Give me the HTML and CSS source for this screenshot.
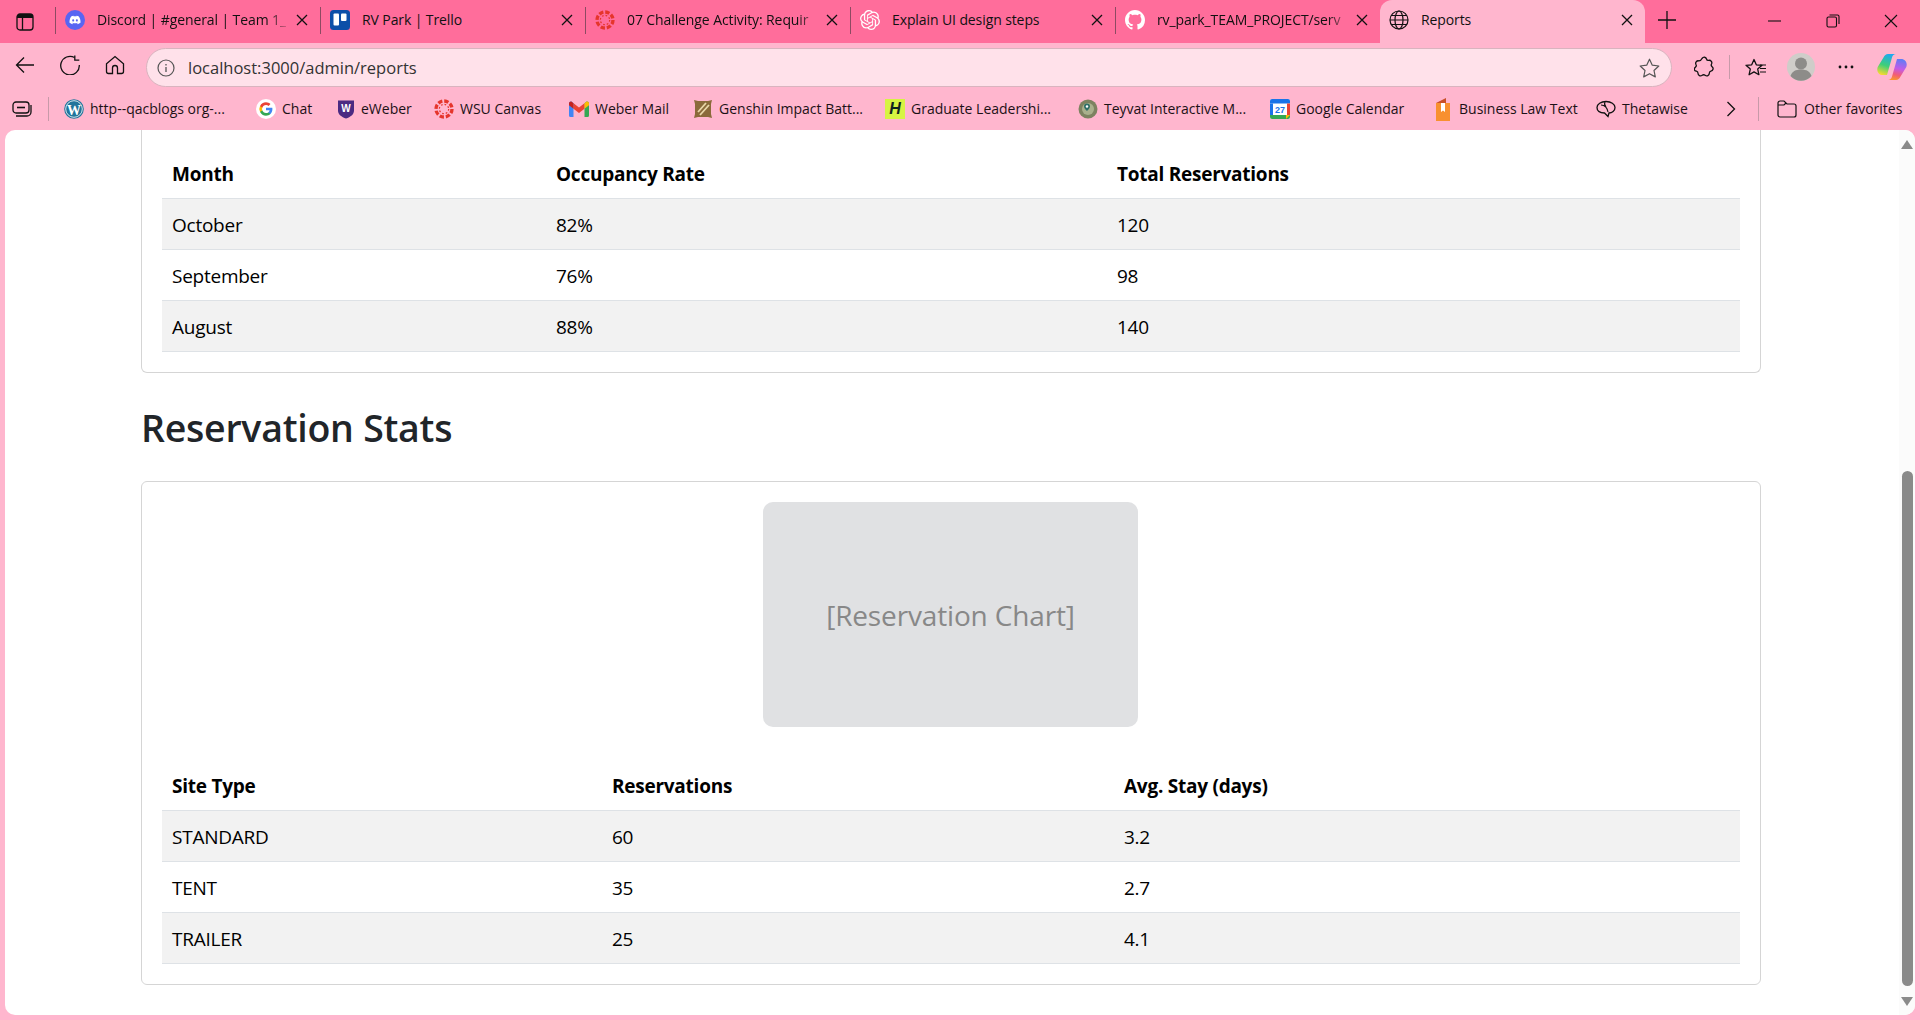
FILE: index.html
```html
<!DOCTYPE html>
<html lang="en">
<head>
    <meta charset="UTF-8">
    <title>Reports</title>
    <link rel="stylesheet" href="styles.css">
</head>
<body>
    <svg class="defs" width="0" height="0">
        <symbol id="x" viewBox="0 0 12 12"><path d="M1 1l10 10M11 1L1 11" fill="none" stroke="#111" stroke-width="1.3"/></symbol>
        <symbol id="canvas" viewBox="0 0 24 24">
            <g fill="none" stroke="#e5352b">
                <circle cx="12" cy="12" r="9.6" stroke-width="4" stroke-dasharray="5.2 2.34"/>
                <circle cx="12" cy="12" r="5.6" stroke-width="1.5" stroke-dasharray="2 2.4"/>
            </g>
        </symbol>
    </svg>

    <!-- tab strip -->
    <div class="tabstrip">
        <div class="strip-btn">
            <svg width="20" height="20" viewBox="0 0 20 20"><rect x="2" y="2" width="16" height="16" rx="3" fill="none" stroke="#111" stroke-width="1.3"/><path d="M2 5a3 3 0 0 1 3-3h10a3 3 0 0 1 3 3v1H2z" fill="#111"/><path d="M7.500 6v12" stroke="#111" stroke-width="1.3"/></svg>
        </div>
        <div class="tab">
            <svg class="favicon" viewBox="0 0 20 20"><circle cx="10" cy="10" r="10" fill="#5865f2"/><g transform="translate(4.500 4.500) scale(.46)"><path fill="#fff" d="M20.317 4.3698a19.7913 19.7913 0 00-4.8851-1.5152.0741.0741 0 00-.0785.0371c-.211.3753-.4447.8648-.6083 1.2495-1.8447-.2762-3.68-.2762-5.4868 0-.1636-.3933-.4058-.8742-.6177-1.2495a.077.077 0 00-.0785-.037 19.7363 19.7363 0 00-4.8852 1.515.0699.0699 0 00-.0321.0277C.5334 9.0458-.319 13.5799.0992 18.0578a.0824.0824 0 00.0312.0561c2.0528 1.5076 4.0413 2.4228 5.9929 3.0294a.0777.0777 0 00.0842-.0276c.4616-.6304.8731-1.2952 1.226-1.9942a.076.076 0 00-.0416-.1057c-.6528-.2476-1.2743-.5495-1.8722-.8923a.077.077 0 01-.0076-.1277c.1258-.0943.2517-.1923.3718-.2914a.0743.0743 0 01.0776-.0105c3.9278 1.7933 8.18 1.7933 12.0614 0a.0739.0739 0 01.0785.0095c.1202.099.246.1981.3728.2924a.077.077 0 01-.0066.1276 12.2986 12.2986 0 01-1.873.8914.0766.0766 0 00-.0407.1067c.3604.698.7719 1.3628 1.225 1.9932a.076.076 0 00.0842.0286c1.961-.6067 3.9495-1.5219 6.0023-3.0294a.077.077 0 00.0313-.0552c.5004-5.177-.8382-9.6739-3.5485-13.6604a.061.061 0 00-.0312-.0286zM8.02 15.3312c-1.1825 0-2.1569-1.0857-2.1569-2.419 0-1.3332.9555-2.4189 2.157-2.4189 1.2108 0 2.1757 1.0952 2.1568 2.419 0 1.3332-.9555 2.4189-2.1569 2.4189zm7.9748 0c-1.1825 0-2.1569-1.0857-2.1569-2.419 0-1.3332.9554-2.4189 2.1569-2.4189 1.2108 0 2.1757 1.0952 2.1568 2.419 0 1.3332-.946 2.4189-2.1568 2.4189Z"/></g></svg>
            <span class="tab-title tab-fade">Discord | #general | Team 1_</span>
            <svg class="tab-x"><use href="#x"/></svg>
        </div>
        <div class="tab">
            <svg class="favicon" viewBox="0 0 20 20"><rect width="20" height="20" rx="3.500" fill="#0c4fa8"/><rect x="3.500" y="3.500" width="5.500" height="12" rx="1" fill="#fff"/><rect x="11" y="3.500" width="5.500" height="7.500" rx="1" fill="#fff"/></svg>
            <span class="tab-title">RV Park | Trello</span>
            <svg class="tab-x"><use href="#x"/></svg>
        </div>
        <div class="tab">
            <svg class="favicon"><use href="#canvas"/></svg>
            <span class="tab-title tab-fade">07 Challenge Activity: Requir</span>
            <svg class="tab-x"><use href="#x"/></svg>
        </div>
        <div class="tab">
            <svg class="favicon" viewBox="0 0 24 24"><path fill="#fff" d="M22.2819 9.8211a5.9847 5.9847 0 0 0-.5157-4.9108 6.0462 6.0462 0 0 0-6.5098-2.9A6.0651 6.0651 0 0 0 4.9807 4.1818a5.9847 5.9847 0 0 0-3.9977 2.9 6.0462 6.0462 0 0 0 .7427 7.0966 5.98 5.98 0 0 0 .511 4.9107 6.051 6.051 0 0 0 6.5146 2.9001A5.9847 5.9847 0 0 0 13.2599 24a6.0557 6.0557 0 0 0 5.7718-4.2058 5.9894 5.9894 0 0 0 3.9977-2.9001 6.0557 6.0557 0 0 0-.7475-7.0729zm-9.022 12.6081a4.4755 4.4755 0 0 1-2.8764-1.0408l.1419-.0804 4.7783-2.7582a.7948.7948 0 0 0 .3927-.6813v-6.7369l2.02 1.1686a.071.071 0 0 1 .038.052v5.5826a4.504 4.504 0 0 1-4.4945 4.4944zm-9.6607-4.1254a4.4708 4.4708 0 0 1-.5346-3.0137l.142.0852 4.783 2.7582a.7712.7712 0 0 0 .7806 0l5.8428-3.3685v2.3324a.0804.0804 0 0 1-.0332.0615L9.74 19.9502a4.4992 4.4992 0 0 1-6.1408-1.6464zM2.3408 7.8956a4.485 4.485 0 0 1 2.3655-1.9728V11.6a.7664.7664 0 0 0 .3879.6765l5.8144 3.3543-2.0201 1.1685a.0757.0757 0 0 1-.071 0l-4.8303-2.7865A4.504 4.504 0 0 1 2.3408 7.872zm16.5963 3.8558L13.1038 8.364 15.1192 7.2a.0757.0757 0 0 1 .071 0l4.8303 2.7913a4.4944 4.4944 0 0 1-.6765 8.1042v-5.6772a.79.79 0 0 0-.407-.667zm2.0107-3.0231l-.142-.0852-4.7735-2.7818a.7759.7759 0 0 0-.7854 0L9.409 9.2297V6.8974a.0662.0662 0 0 1 .0284-.0615l4.8303-2.7866a4.4992 4.4992 0 0 1 6.6802 4.66zM8.3065 12.863l-2.02-1.1638a.0804.0804 0 0 1-.038-.0567V6.0742a4.4992 4.4992 0 0 1 7.3757-3.4537l-.142.0805L8.704 5.459a.7948.7948 0 0 0-.3927.6813zm1.0976-2.3654l2.602-1.4998 2.6069 1.4998v2.9994l-2.5974 1.4997-2.6067-1.4997Z"/></svg>
            <span class="tab-title">Explain UI design steps</span>
            <svg class="tab-x"><use href="#x"/></svg>
        </div>
        <div class="tab">
            <svg class="favicon" viewBox="0 0 16 16"><path fill="#fff" d="M8 0C3.58 0 0 3.58 0 8c0 3.54 2.29 6.53 5.47 7.59.4.07.55-.17.55-.38 0-.19-.01-.82-.01-1.49-2.01.37-2.53-.49-2.69-.94-.09-.23-.48-.94-.82-1.13-.28-.15-.68-.52-.01-.53.63-.01 1.08.58 1.23.82.72 1.21 1.87.87 2.33.66.07-.52.28-.87.51-1.07-1.78-.2-3.64-.89-3.64-3.95 0-.87.31-1.59.82-2.15-.08-.2-.36-1.02.08-2.12 0 0 .67-.21 2.2.82.64-.18 1.32-.27 2-.27.68 0 1.36.09 2 .27 1.53-1.04 2.2-.82 2.2-.82.44 1.1.16 1.92.08 2.12.51.56.82 1.27.82 2.15 0 3.07-1.87 3.75-3.65 3.95.29.25.54.73.54 1.48 0 1.07-.01 1.93-.01 2.2 0 .21.15.46.55.38A8.013 8.013 0 0016 8c0-4.42-3.58-8-8-8z"/></svg>
            <span class="tab-title tab-fade">rv_park_TEAM_PROJECT/serv</span>
            <svg class="tab-x"><use href="#x"/></svg>
        </div>
        <div class="tab tab-active">
            <svg class="favicon" viewBox="0 0 20 20"><g fill="none" stroke="#111" stroke-width="1.200"><circle cx="10" cy="10" r="9"/><ellipse cx="10" cy="10" rx="4" ry="9"/><path d="M1 10h18M2.200 5.500h15.600M2.200 14.500h15.600"/></g></svg>
            <span class="tab-title">Reports</span>
            <svg class="tab-x"><use href="#x"/></svg>
        </div>
        <svg class="new-tab" width="18" height="18" viewBox="0 0 18 18"><path d="M9 0v18M0 9h18" stroke="#111" stroke-width="1.300"/></svg>
        <div class="win-btns">
            <svg width="14" height="14" viewBox="0 0 14 14"><path d="M0 7h13" stroke="#111" stroke-width="1.100"/></svg>
            <svg width="14" height="14" viewBox="0 0 14 14"><rect x="1" y="3" width="9.500" height="10" rx="1.500" fill="none" stroke="#111" stroke-width="1.100"/><path d="M3.500 1h8a1.500 1.500 0 0 1 1.500 1.500V10" fill="none" stroke="#111" stroke-width="1.100"/></svg>
            <svg width="14" height="14" viewBox="0 0 14 14"><path d="M1 1l12 12M13 1L1 13" stroke="#111" stroke-width="1.100"/></svg>
        </div>
    </div>

    <!-- address bar row -->
    <div class="toolbar">
        <div class="nav-btns">
            <svg width="20" height="20" viewBox="0 0 20 20"><path d="M19 10H1.500M9 2.500L1.500 10 9 17.500" fill="none" stroke="#111" stroke-width="1.300"/></svg>
            <svg width="20" height="20" viewBox="0 0 20 20"><path d="M14.500 2.500A9.300 9.300 0 1 0 19.300 10" fill="none" stroke="#111" stroke-width="1.300"/><path d="M14.800 .5v4.600h4.500" fill="none" stroke="#111" stroke-width="1.300"/></svg>
            <svg width="20" height="20" viewBox="0 0 20 20"><path d="M7.500 18.500v-5.500a2.500 2.500 0 0 1 5 0v5.500h4a2 2 0 0 0 2-2V8.800L10 1.500 1.500 8.800v7.700a2 2 0 0 0 2 2z" fill="none" stroke="#111" stroke-width="1.300"/></svg>
        </div>
        <div class="address">
            <svg width="18" height="18" viewBox="0 0 18 18"><circle cx="9" cy="9" r="8" fill="none" stroke="#555" stroke-width="1.200"/><path d="M9 8v5M9 5v1.500" stroke="#555" stroke-width="1.300"/></svg>
            <span class="url">localhost:3000/admin/reports</span>
            <svg class="star" width="21" height="20" viewBox="0 0 21 20"><path d="M10.500 1.200l2.800 6 6.500.8-4.800 4.500 1.300 6.400-5.800-3.200-5.800 3.200 1.300-6.400L1.200 8l6.500-.8z" fill="none" stroke="#555" stroke-width="1.200" stroke-linejoin="round"/></svg>
        </div>
        <div class="tools">
            <svg class="tool-ext" width="20" height="22" viewBox="0 0 20 22"><path d="M8 2.500c1.500-2 4-1.500 4.500.5.300 1.200 1 1.500 2.200 1.300 2.300-.3 3.800 1.700 2.800 3.700-.6 1.100-.3 2 .6 2.700 1.800 1.400 1 4-1.200 4.500-1.200.3-1.600 1-1.600 2.100 0 2.300-2.400 3.400-4.200 2-1-.8-1.900-.8-2.900 0-1.800 1.400-4.200.3-4.200-2 0-1.100-.4-1.800-1.600-2.100C.2 15.200-.4 12.600 1.400 11.200c.9-.7 1.200-1.600.6-2.700-1-2 .5-4 2.800-3.700 1.400.1 2.300-.4 3.200-2.300z" fill="none" stroke="#111" stroke-width="1.300"/></svg>
            <span class="tool-sep"></span>
            <svg class="tool-fav" width="22" height="20" viewBox="0 0 22 20"><path d="M9 1.500l2.300 5.300 5.700.5-4.300 3.800 1.200 5.600L9 13.900l-4.900 2.800 1.200-5.600L1 7.300l5.700-.5z" transform="translate(0 1)" fill="none" stroke="#111" stroke-width="1.300" stroke-linejoin="round"/><path d="M15 8h6M15 11.500h6M15 15h6" stroke="#111" stroke-width="1.200"/></svg>
            <svg class="tool-avatar" width="28" height="28" viewBox="0 0 28 28"><circle cx="14" cy="14" r="14" fill="#cfcdc9"/><circle cx="14" cy="10.500" r="6" fill="#8d8c89"/><path d="M3.500 23c1.500-4.500 5-6.500 10.500-6.500S23 18.500 24.500 23a14 14 0 0 1-21 0z" fill="#8d8c89"/></svg>
            <svg class="tool-dots" width="16" height="4" viewBox="0 0 16 4"><circle cx="2" cy="2" r="1.400" fill="#111"/><circle cx="8" cy="2" r="1.400" fill="#111"/><circle cx="14" cy="2" r="1.400" fill="#111"/></svg>
            <svg class="tool-copilot" width="30" height="28" viewBox="0 0 30 28">
                <defs>
                    <linearGradient id="cpa" x1=".6" y1="0" x2=".3" y2="1"><stop offset="0" stop-color="#1fa8f0"/><stop offset=".55" stop-color="#3fcf78"/><stop offset="1" stop-color="#f7d92f"/></linearGradient>
                    <linearGradient id="cpb" x1=".6" y1="0" x2=".4" y2="1"><stop offset="0" stop-color="#5f7cf5"/><stop offset=".45" stop-color="#c25be8"/><stop offset=".75" stop-color="#f25c78"/><stop offset="1" stop-color="#f9952f"/></linearGradient>
                </defs>
                <path d="M11 1h8c-2 0-3.500 1.500-4 3.500L10 22H6C1.500 22-.7 18 .7 14L6.500 4.500C7.500 2.500 9 1 11 1z" fill="url(#cpa)"/>
                <path d="M19 27h-8c2 0 3.500-1.500 4-3.500L20 6h4c4.500 0 6.700 4 5.300 8l-5.800 9.500c-1 2-2.500 3.500-4.500 3.500z" fill="url(#cpb)"/>
            </svg>
        </div>
    </div>

    <!-- favorites bar -->
    <div class="favbar">
        <svg class="bar-collections" width="20" height="16" viewBox="0 0 20 16"><rect x="1" y="1" width="16" height="11" rx="3" fill="none" stroke="#111" stroke-width="1.300"/><path d="M5 6.500h8" stroke="#111" stroke-width="1.600"/><path d="M19 4v7a4 4 0 0 1-4 4H4" fill="none" stroke="#111" stroke-width="1.300"/></svg>
        <span class="bar-sep"></span>
        <div class="bm bm-wp">
            <svg class="bm-icon" viewBox="0 0 20 20"><circle cx="10" cy="10" r="9.800" fill="#21759b"/><circle cx="10" cy="10" r="8.300" fill="none" stroke="#fff" stroke-width=".8"/><text x="10" y="15.500" class="wp-letter">W</text></svg>
            <span>http--qacblogs org-...</span>
        </div>
        <div class="bm bm-chat">
            <svg class="bm-icon" viewBox="0 0 24 24"><circle cx="12" cy="12" r="12" fill="#fff"/><g transform="translate(3.600 3.600) scale(.7)"><path fill="#4285f4" d="M23 12.200c0-.8-.1-1.600-.2-2.300H12v4.300h6.200a5.300 5.300 0 0 1-2.300 3.500v2.900h3.700c2.200-2 3.400-5 3.400-8.400z"/><path fill="#34a853" d="M12 23.500c3.100 0 5.700-1 7.600-2.800l-3.700-2.900c-1 .7-2.300 1.100-3.900 1.100-3 0-5.500-2-6.400-4.700H1.800v3A11.500 11.500 0 0 0 12 23.500z"/><path fill="#fbbc05" d="M5.600 14.200a6.900 6.900 0 0 1 0-4.400v-3H1.800a11.500 11.500 0 0 0 0 10.400z"/><path fill="#ea4335" d="M12 5.100c1.700 0 3.200.6 4.400 1.700l3.300-3.300C17.700 1.700 15.100.5 12 .5A11.500 11.500 0 0 0 1.800 6.800l3.800 3c.9-2.700 3.400-4.700 6.400-4.700z"/></g></svg>
            <span>Chat</span>
        </div>
        <div class="bm bm-eweber">
            <svg class="bm-icon-narrow" viewBox="0 0 16 20"><path d="M0 1.500h16v10c0 4-3.500 6.500-8 8-4.500-1.500-8-4-8-8z" fill="#4b2a82"/><text x="8" y="12.500" class="shield-letter">W</text></svg>
            <span>eWeber</span>
        </div>
        <div class="bm bm-canvas">
            <svg class="bm-icon"><use href="#canvas"/></svg>
            <span>WSU Canvas</span>
        </div>
        <div class="bm bm-gmail">
            <svg class="bm-icon" viewBox="0 0 20 16"><path d="M0 2.500C0 .8 1.800 0 3 1l1.500 1.200V16H1.500A1.500 1.500 0 0 1 0 14.500z" fill="#4285f4"/><path d="M15.500 2.200L17 1c1.200-1 3-.2 3 1.500v12a1.500 1.500 0 0 1-1.500 1.500h-3z" fill="#34a853"/><path d="M4.500 2.200L10 6.500l5.500-4.300v5.500L10 12 4.500 7.700z" fill="#ea4335"/><path d="M17 1l-1.500 1.200v5.500L20 4.200V2.500C20 .8 18.200 0 17 1z" fill="#fbbc05"/><path d="M3 1l1.500 1.200v5.500L0 4.200V2.500C0 .8 1.800 0 3 1z" fill="#c5221f"/></svg>
            <span>Weber Mail</span>
        </div>
        <div class="bm bm-genshin">
            <svg class="bm-icon" viewBox="0 0 20 20"><path d="M1 1l4 1h10l4-1-1 4v10l1 4-4-1H5l-4 1 1-4V5z" fill="#8a6a3a"/><path d="M5 13L13 4M7 16L16 6" stroke="#e8d6a8" stroke-width="1.800"/></svg>
            <span>Genshin Impact Batt...</span>
        </div>
        <div class="bm bm-grad">
            <div class="h-logo">H</div>
            <span>Graduate Leadershi...</span>
        </div>
        <div class="bm bm-teyvat">
            <svg class="bm-icon" viewBox="0 0 20 20"><circle cx="10" cy="10" r="9.500" fill="#7d8260"/><circle cx="10" cy="10" r="6" fill="#a9b08c"/><path d="M9 4.500a3 3 0 0 1 3 3c0 2-3 4.500-3 4.500S6 9.500 6 7.500a3 3 0 0 1 3-3z" fill="#2f6f68"/><circle cx="9" cy="7.500" r="1.200" fill="#fff"/></svg>
            <span>Teyvat Interactive M...</span>
        </div>
        <div class="bm bm-cal">
            <svg class="bm-icon" viewBox="0 0 20 20"><rect width="20" height="20" rx="2" fill="#fff"/><path d="M0 2a2 2 0 0 1 2-2h16a2 2 0 0 1 2 2v2.500H0z" fill="#1a73e8"/><path d="M0 4.500h3V17H0z" fill="#1a73e8"/><path d="M0 16h20v2a2 2 0 0 1-2 2H2a2 2 0 0 1-2-2z" fill="#34a853"/><path d="M16 16h4l-4 4z" fill="#fbbc05"/><path d="M17 4.500h3V16h-3z" fill="#ea4335"/><text x="10" y="14" class="cal-date">27</text></svg>
            <span>Google Calendar</span>
        </div>
        <div class="bm bm-book">
            <svg class="bm-book-icon" width="14" height="24" viewBox="0 0 14 24"><path d="M0 6l10-5v5z" fill="#c9502a"/><path d="M0 6h14v18H0z" fill="#f8902f"/><path d="M5 6h4v9l-2-1.500L5 15z" fill="#fff"/></svg>
            <span>Business Law Text</span>
        </div>
        <div class="bm bm-theta">
            <svg class="bm-icon" viewBox="0 0 20 18"><path d="M10 1.500c5 0 9 2.500 9 6s-3 5.500-6 5.500l-1 3.500L8.500 13C4 13 1 11 1 7.500s4-6 9-6z" fill="none" stroke="#111" stroke-width="1.300"/><path d="M5 5c3 0 6 2 7 7M9 2c-1 2 0 4 1 5" fill="none" stroke="#111" stroke-width="1.100"/></svg>
            <span>Thetawise</span>
        </div>
        <svg class="bar-more" width="10" height="16" viewBox="0 0 10 16"><path d="M1.500 1l7 7-7 7" fill="none" stroke="#111" stroke-width="1.300"/></svg>
        <span class="bar-sep bar-sep-end"></span>
        <div class="bm-other">
            <svg width="20" height="18" viewBox="0 0 20 18"><path d="M1 3a2 2 0 0 1 2-2h4l3 3h7a2 2 0 0 1 2 2v9a2 2 0 0 1-2 2H3a2 2 0 0 1-2-2z" fill="none" stroke="#111" stroke-width="1.200"/><path d="M1 5h6l2-2" fill="none" stroke="#111" stroke-width="1.200"/></svg>
            <span>Other favorites</span>
        </div>
    </div>

    <!-- page -->
    <div class="viewport">
        <main class="page">
            <section class="card card-cut">
                <table class="report report-occupancy">
                    <colgroup><col class="col-a"><col class="col-b"><col></colgroup>
                    <thead>
                        <tr><th>Month</th><th>Occupancy Rate</th><th>Total Reservations</th></tr>
                    </thead>
                    <tbody>
                        <tr><td>October</td><td>82%</td><td>120</td></tr>
                        <tr><td>September</td><td>76%</td><td>98</td></tr>
                        <tr><td>August</td><td>88%</td><td>140</td></tr>
                    </tbody>
                </table>
            </section>

            <h2>Reservation Stats</h2>

            <section class="card">
                <div class="chart">[Reservation Chart]</div>
                <table class="report report-stats">
                    <colgroup><col class="col-a"><col class="col-b"><col></colgroup>
                    <thead>
                        <tr><th>Site Type</th><th>Reservations</th><th>Avg. Stay (days)</th></tr>
                    </thead>
                    <tbody>
                        <tr><td>STANDARD</td><td>60</td><td>3.2</td></tr>
                        <tr><td>TENT</td><td>35</td><td>2.7</td></tr>
                        <tr><td>TRAILER</td><td>25</td><td>4.1</td></tr>
                    </tbody>
                </table>
            </section>
        </main>
        <div class="scrollbar">
            <span class="arrow-up"></span>
            <span class="thumb"></span>
            <span class="arrow-down"></span>
        </div>
    </div>
</body>
</html>
```

FILE: styles.css
```css
/* General */
html, body {
    margin: 0;
    height: 100%;
    overflow: hidden;
}
body {
    width: 1920px;
    height: 1020px;
    font-family: "Open Sans", "Noto Sans", sans-serif;
    color: #111;
    background: #ffb6ce;
    display: flex;
    flex-direction: column;
}
.defs {
    position: absolute;
}
svg {
    display: block;
    flex: none;
}

/* Tab strip */
.tabstrip {
    height: 43px;
    background: #ff6d9b;
    display: flex;
    align-items: center;
    font-size: 14px;
}
.strip-btn {
    width: 55px;
    padding-left: 15px;
    box-sizing: border-box;
}
.tab {
    width: 265px;
    height: 27px;
    margin-top: -3px;
    box-sizing: border-box;
    padding: 0 9px;
    display: flex;
    align-items: center;
    border-left: 1px solid #8d4a62;
}
.favicon {
    width: 20px;
    height: 20px;
    margin-right: 12px;
}
.tab-title {
    flex: 1;
    padding-bottom: 2px;
    letter-spacing: -0.1px;
    white-space: nowrap;
    overflow: hidden;
}
.tab-fade {
    -webkit-mask-image: linear-gradient(to right, #000 90%, rgba(0, 0, 0, 0.25));
    mask-image: linear-gradient(to right, #000 90%, rgba(0, 0, 0, 0.25));
}
.tab-x {
    width: 12px;
    height: 12px;
    margin: 0 3px 0 10px;
}
.tab-active {
    height: 43px;
    margin-top: 0;
    background: #ffb6ce;
    border-left: none;
    border-radius: 12px 12px 0 0;
    padding-bottom: 3px;
}
.new-tab {
    margin: -3px 0 0 13px;
}
.win-btns {
    margin-left: auto;
    padding-right: 22px;
    display: flex;
    gap: 44px;
    margin-top: -2px;
}

/* Toolbar */
.toolbar {
    height: 44px;
    display: flex;
    align-items: center;
}
.nav-btns {
    display: flex;
    gap: 25px;
    padding-left: 15px;
    width: 146px;
    box-sizing: border-box;
}
.address {
    width: 1526px;
    height: 39px;
    margin-top: 5px;
    box-sizing: border-box;
    background: #ffe1ea;
    border: 1px solid #d9b4bf;
    border-radius: 20px;
    display: flex;
    align-items: center;
    padding: 0 11px 0 10px;
}
.url {
    margin-left: 13px;
    font-size: 16.5px;
    color: #333;
    flex: 1;
}
.tools {
    display: flex;
    align-items: center;
    margin-top: 3px;
}
.tool-ext {
    margin-left: 22px;
}
.tool-sep {
    width: 1px;
    height: 24px;
    background: #c79aa9;
    margin-left: 15px;
}
.tool-fav {
    margin-left: 15px;
}
.tool-avatar {
    margin-left: 20px;
}
.tool-dots {
    margin-left: 23px;
}
.tool-copilot {
    margin-left: 23px;
}

/* Favorites bar */
.favbar {
    height: 43px;
    display: flex;
    align-items: center;
    font-size: 14px;
    color: #1c1116;
}
.bar-collections {
    margin-left: 12px;
}
.bar-sep {
    width: 1px;
    height: 24px;
    background: #c79aa9;
    margin: 0 15px 0 16px;
}
.bm {
    display: flex;
    align-items: center;
    white-space: nowrap;
}
.bm-icon {
    width: 20px;
    height: 20px;
    margin-right: 6px;
}
.bm-icon-narrow {
    width: 16px;
    height: 20px;
    margin-right: 7px;
}
.bm-book-icon {
    margin-right: 9px;
}
.bm-wp { width: 192px; }
.bm-chat { width: 82px; }
.bm-eweber { width: 96px; }
.bm-canvas { width: 135px; }
.bm-gmail { width: 124px; }
.bm-genshin { width: 192px; }
.bm-grad { width: 193px; }
.bm-teyvat { width: 192px; }
.bm-cal { width: 166px; }
.bm-book { width: 160px; }
.bm-theta { width: 130px; }
.wp-letter {
    font: bold 14px "Liberation Serif", serif;
    fill: #fff;
    text-anchor: middle;
}
.shield-letter {
    font: bold 10px "Liberation Sans", sans-serif;
    fill: #fff;
    text-anchor: middle;
}
.cal-date {
    font: bold 9px "Liberation Sans", sans-serif;
    fill: #1a73e8;
    text-anchor: middle;
}
.h-logo {
    width: 20px;
    height: 20px;
    margin-right: 6px;
    background: #d7f442;
    color: #10231f;
    font: italic bold 16px/20px "Liberation Sans", sans-serif;
    text-align: center;
}
.bar-sep-end {
    margin: 0 18px 0 22px;
}
.bm-other {
    display: flex;
    align-items: center;
    gap: 7px;
    white-space: nowrap;
}

/* Page area */
.viewport {
    flex: none;
    height: 885px;
    width: 1910px;
    margin-left: 5px;
    background: #fff;
    border-radius: 10px;
    overflow: hidden;
    display: flex;
}
.page {
    flex: 1;
    padding-left: 136px;
    color: #000;
}
.card {
    width: 1620px;
    box-sizing: border-box;
    border: 1px solid #d5d5d5;
    border-radius: 6px;
    padding: 20px;
}
.card-cut {
    border-top: none;
    border-radius: 0 0 6px 6px;
    padding-top: 18px;
}
h2 {
    margin: 31px 0 29px;
    font-size: 37.5px;
    line-height: 48px;
    font-weight: 600;
    letter-spacing: -0.25px;
    color: #212529;
}

/* Tables */
.report {
    width: 100%;
    border-collapse: collapse;
    table-layout: fixed;
    font-size: 19px;
    line-height: 30px;
}
.report th, .report td {
    padding: 11px 10px 9px;
    text-align: left;
    border-bottom: 1px solid #dee2e6;
}
.report td {
    letter-spacing: -0.25px;
}
.report th {
    font-weight: 700;
    letter-spacing: -0.25px;
}
.report tbody tr:nth-child(odd) {
    background: #f2f2f2;
}
.report-occupancy .col-a { width: 384px; }
.report-occupancy .col-b { width: 561px; }
.report-stats .col-a { width: 440px; }
.report-stats .col-b { width: 512px; }

.chart {
    width: 375px;
    height: 225px;
    margin: 0 0 33px 601px;
    border-radius: 10px;
    background: #e0e1e3;
    color: #888;
    font-size: 28px;
    letter-spacing: -0.15px;
    display: flex;
    align-items: center;
    justify-content: center;
}

/* Scrollbar */
.scrollbar {
    width: 16px;
    background: #fbfbfb;
    display: flex;
    flex-direction: column;
    align-items: center;
}
.arrow-up, .arrow-down {
    width: 0;
    height: 0;
    border-left: 6px solid transparent;
    border-right: 6px solid transparent;
}
.arrow-up {
    border-bottom: 9px solid #8a8a8a;
    margin-top: 10px;
}
.arrow-down {
    border-top: 9px solid #8a8a8a;
    margin-top: 11px;
}
.thumb {
    width: 11px;
    height: 515px;
    margin-top: 322px;
    border-radius: 6px;
    background: #8a8a8a;
}
```
